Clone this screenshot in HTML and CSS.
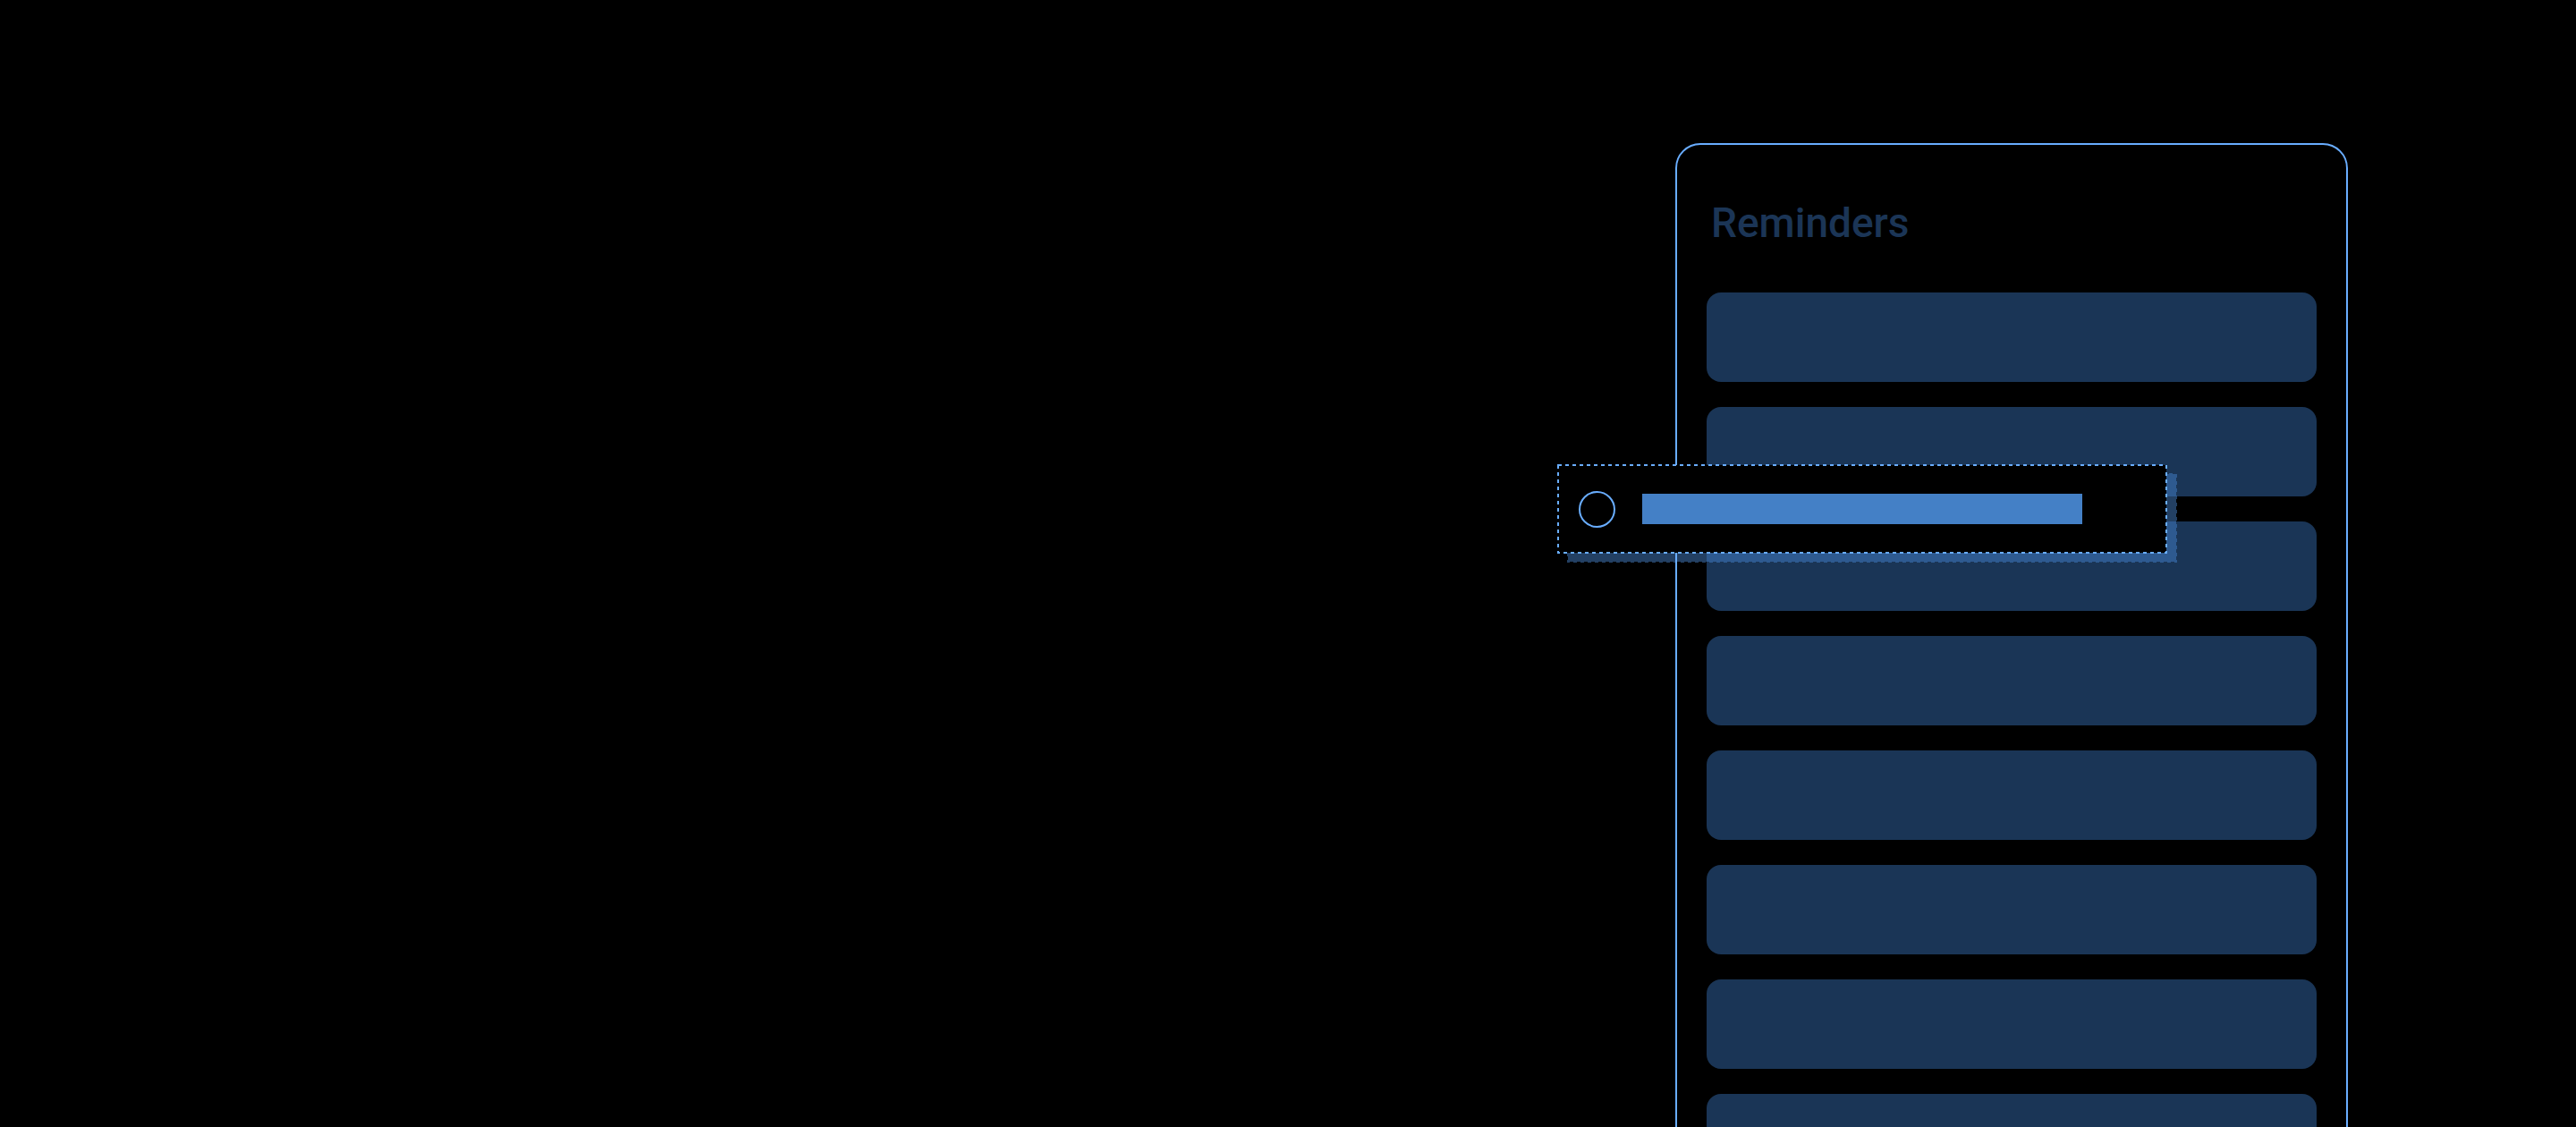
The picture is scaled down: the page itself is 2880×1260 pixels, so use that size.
FILE: index.html
```html
<!DOCTYPE html>
<html lang="en">
<head>
<meta charset="utf-8">
<meta name="viewport" content="width=device-width, initial-scale=1">
<title>Reminders</title>
<link rel="stylesheet" href="styles.css">
</head>
<body>
<main class="stage">
  <section class="panel" aria-labelledby="panel-title">
    <div class="panel-body">
      <h1 class="panel-title" id="panel-title">Reminders</h1>
      <ul class="rows">
        <li class="row"></li>
        <li class="row"></li>
        <li class="row"></li>
        <li class="row"></li>
        <li class="row"></li>
        <li class="row"></li>
        <li class="row"></li>
        <li class="row"></li>
      </ul>
    </div>
    <svg class="drag-shadow" viewBox="0 0 682 100" aria-hidden="true">
      <rect class="shadow-fill" x="1" y="1" width="680" height="98"/>
    </svg>
    <div class="drag-card">
      <svg class="drag-outline" viewBox="0 0 682 100" aria-hidden="true">
        <rect class="outline-stroke" x="1" y="1" width="680" height="98"/>
      </svg>
      <input class="check" type="checkbox" aria-label="Mark reminder as done">
      <span class="bar"></span>
    </div>
  </section>
</main>
</body>
</html>
```
FILE: styles.css
```css
* {
  box-sizing: border-box;
}

body {
  margin: 0;
  background: #000;
  font-family: Roboto, "Liberation Sans", sans-serif;
}

.stage {
  display: flex;
  justify-content: flex-end;
  align-items: flex-start;
  height: 100vh;
  padding: 160px 255px 0 140px;
  overflow: hidden;
}

.panel {
  position: relative;
  isolation: isolate;
  flex: 0 1 752px;
}

.panel-body {
  padding: 57px 33px 32px;
  border: 2px solid #69adff;
  border-radius: 28px;
}

.panel-title {
  margin: 0 0 48px 5px;
  color: #1b3556;
  font-size: 46px;
  font-weight: 500;
  line-height: 60px;
}

.rows {
  display: grid;
  gap: 28px;
  margin: 0;
  padding: 0;
  list-style: none;
}

.row {
  height: 100px;
  border-radius: 16px;
  background: rgba(64, 128, 208, 0.41);
}

.drag-card,
.drag-shadow {
  position: absolute;
  top: 359px;
  left: -132px;
  width: 682px;
  height: 100px;
}

.drag-shadow {
  z-index: -1;
  transform: translate(11px, 10px);
}

.shadow-fill {
  fill: #234063;
  stroke: #234063;
  stroke-width: 2;
  stroke-dasharray: 4 4;
}

.drag-card {
  z-index: 1;
  display: flex;
  align-items: center;
  gap: 30px;
  padding: 0 24px;
}

.drag-outline {
  position: absolute;
  inset: 0;
  z-index: -1;
  width: 100%;
  height: 100%;
  pointer-events: none;
}

.outline-stroke {
  fill: #000;
  stroke: #69adff;
  stroke-width: 2;
  stroke-dasharray: 4 4;
}

.check {
  appearance: none;
  width: 41px;
  height: 41px;
  margin: 0;
  border: 2px solid #69adff;
  border-radius: 50%;
}

.bar {
  width: 492px;
  height: 34px;
  background: #4480c6;
}
```
